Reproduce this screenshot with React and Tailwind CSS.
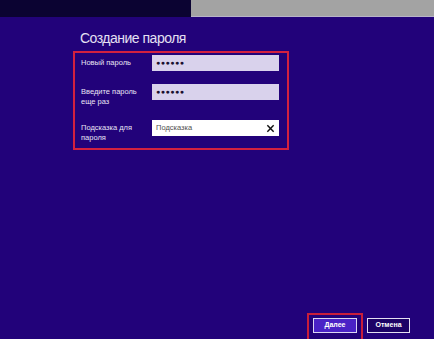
export default function App() {
  const font = { fontFamily: '"Liberation Sans", Arial, sans-serif' };

  return (
    <div
      className="relative h-[339px] w-[434px] overflow-hidden bg-[#22027a] flex flex-col"
      style={font}
    >
      {/* top strip */}
      <div className="flex h-[17px] shrink-0">
        <div className="w-[191px] bg-[#0b0332]" />
        <div className="flex-1 bg-[#a3a3a3] border-b border-[#b8b4c8]" />
      </div>

      <div className="pl-[73px]">
        <h1 className="pl-[7px] pt-[12px] text-[14px] leading-[19px] tracking-[-0.5px] text-[#e4e0f2]">
          Создание пароля
        </h1>

        <div className="mt-[3px] w-[216px] border-2 border-[#d3213f] pt-[2px] pb-[5px] pl-[6px]">
          <div className="flex items-start">
            <div className="w-[71px] pt-[3px] text-[7.5px] leading-[10px] text-[#e8e4f4]">
              Новый пароль
            </div>
            <div className="flex h-[16px] w-[127px] items-center bg-[#d9d2ec] pl-[4px] text-[7px] font-bold tracking-[0.5px] text-[#1a1030]">
              ●●●●●●
            </div>
          </div>

          <div className="mt-[13px] flex items-start">
            <div className="w-[71px] pt-[3px] text-[7.5px] leading-[10px] text-[#e8e4f4]">
              Введите пароль
              <br />
              еще раз
            </div>
            <div className="flex h-[16px] w-[127px] items-center bg-[#d9d2ec] pl-[4px] text-[7px] font-bold tracking-[0.5px] text-[#1a1030]">
              ●●●●●●
            </div>
          </div>

          <div className="mt-[13px] flex items-start">
            <div className="w-[71px] pt-[3px] text-[7.5px] leading-[10px] text-[#e8e4f4]">
              Подсказка для
              <br />
              пароля
            </div>
            <div className="flex h-[16px] w-[127px] items-center justify-between bg-white pl-[4px] pr-[4px]">
              <span className="text-[7.5px] text-[#505050]">Подсказка</span>
              <svg width="9" height="9" viewBox="0 0 10 10">
                <path d="M1.5 1.5 L8.5 8.5 M8.5 1.5 L1.5 8.5" stroke="#111" strokeWidth="1.6" />
              </svg>
            </div>
          </div>
        </div>
      </div>

      <div className="flex-1" />

      {/* bottom buttons */}
      <div className="flex items-start justify-end pr-[24px] h-[26px]">
        <div className="border-2 border-[#c81e3a] pt-[3px] pl-[4px] pr-[4px] pb-[10px]">
          <button className="flex h-[15px] w-[44px] items-center justify-center border border-[#dcd6f4] bg-[#4a22c6] text-[7px] font-bold text-white">
            Далее
          </button>
        </div>
        <button className="ml-[4px] mt-[5px] flex h-[15px] w-[43px] items-center justify-center border border-[#e4e0f2] bg-[#1c0266] text-[7px] font-bold text-white">
          Отмена
        </button>
      </div>
    </div>
  );
}
